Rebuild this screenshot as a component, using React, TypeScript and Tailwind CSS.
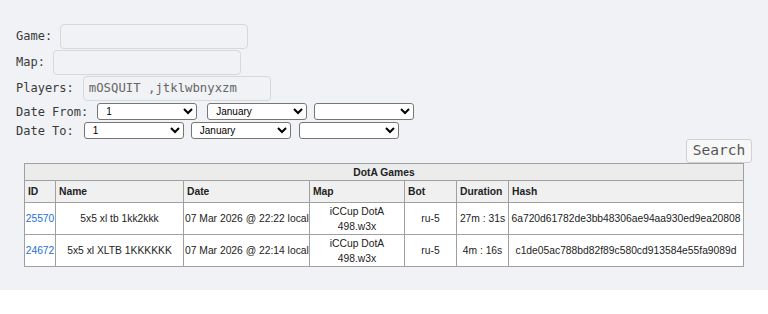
import React from 'react';

const MONO = { fontFamily: '"DejaVu Sans Mono", monospace' };

const games = [
  { id: '25570', name: '5x5 xl tb 1kk2kkk', date: '07 Mar 2026 @ 22:22 local', map: 'iCCup DotA 498.w3x', bot: 'ru-5', duration: '27m : 31s', hash: '6a720d61782de3bb48306ae94aa930ed9ea20808' },
  { id: '24672', name: '5x5 xl XLTB 1KKKKKK', date: '07 Mar 2026 @ 22:14 local', map: 'iCCup DotA 498.w3x', bot: 'ru-5', duration: '4m : 16s', hash: 'c1de05ac788bd82f89c580cd913584e55fa9089d' },
];

const days = Array.from({ length: 31 }, (_, i) => String(i + 1));
const months = ['January', 'February', 'March', 'April', 'May', 'June', 'July', 'August', 'September', 'October', 'November', 'December'];

// one row of date selects: day, month, year
const DateSelects: React.FC<{ gaps: [string, string] }> = ({ gaps }) => (
  <>
    <select className="h-[17px] w-[100px] rounded-[3px] border border-[#767676] bg-white pl-1 text-[10px] text-black" style={{ fontFamily: '"Liberation Sans", Arial, sans-serif' }} defaultValue="1">
      {days.map((d) => <option key={d}>{d}</option>)}
    </select>
    <select className={`${gaps[0]} h-[17px] w-[100px] rounded-[3px] border border-[#767676] bg-white pl-1 text-[10px] text-black`} style={{ fontFamily: '"Liberation Sans", Arial, sans-serif' }} defaultValue="January">
      {months.map((m) => <option key={m}>{m}</option>)}
    </select>
    <select className={`${gaps[1]} h-[17px] w-[100px] rounded-[3px] border border-[#767676] bg-white pl-1 text-[10px] text-black`} defaultValue="">
      <option value=""></option>
    </select>
  </>
);

const App: React.FC = () => {
  return (
    <div className="min-h-[314px] bg-white">
      <div className="bg-[#f0f2f5] px-4 pb-[23px] pt-[23px]">
        {/* search form */}
        <div className="flex h-[26px] items-center text-[12px] text-[#3a3a3a]" style={MONO}>
          <span>Game:</span>
          <input className="ml-2 h-[25px] w-[188px] rounded-[4px] border border-[#d6d8dc] bg-[#f0f2f5] px-1" />
        </div>
        <div className="flex h-[26px] items-center text-[12px] text-[#3a3a3a]" style={MONO}>
          <span>Map:</span>
          <input className="ml-2 h-[25px] w-[188px] rounded-[4px] border border-[#d6d8dc] bg-[#f0f2f5] px-1" />
        </div>
        <div className="flex h-[26px] items-center text-[12px] text-[#3a3a3a]" style={MONO}>
          <span>Players:</span>
          <input
            className="ml-[9px] h-[25px] w-[188px] rounded-[4px] border border-[#d6d8dc] bg-[#f0f2f5] px-[5px] text-[12.3px] text-[#666]"
            defaultValue="mOSQUIT ,jtklwbnyxzm"
          />
        </div>
        <div className="mt-[2px] flex h-[17px] items-center text-[12px] text-[#3a3a3a]" style={MONO}>
          <span className="mr-[9px]">Date From:</span>
          <DateSelects gaps={['ml-[10px]', 'ml-[7px]']} />
        </div>
        <div className="mt-[2px] flex h-[17px] items-center text-[12px] text-[#3a3a3a]" style={MONO}>
          <span className="mr-[10px]">Date To:</span>
          <DateSelects gaps={['ml-[7px]', 'ml-[8px]']} />
        </div>
        <div className="flex justify-end">
          <button className="h-[24px] w-[66px] rounded-[3px] border border-[#d0d0d0] bg-[#f7f7f7] text-[14.5px] text-[#555]" style={MONO}>
            Search
          </button>
        </div>

        {/* results */}
        <table
          className="mx-auto w-[720px] table-fixed border-collapse border border-[#a0a0a0] text-[10.3px] leading-[15px] text-[#222]"
          style={{ fontFamily: '"Liberation Sans", Arial, sans-serif' }}
        >
          <colgroup>
            <col className="w-[31px]" />
            <col className="w-[128px]" />
            <col className="w-[126px]" />
            <col className="w-[95px]" />
            <col className="w-[52px]" />
            <col className="w-[52px]" />
            <col />
          </colgroup>
          <thead>
            <tr className="h-[17px] bg-[#ececec]">
              <th colSpan={7} className="border border-[#a0a0a0] text-center font-bold">DotA Games</th>
            </tr>
            <tr className="h-[22px] bg-[#f0f0f0]">
              {['ID', 'Name', 'Date', 'Map', 'Bot', 'Duration', 'Hash'].map((h) => (
                <th key={h} className="border border-[#a0a0a0] px-[3px] text-left font-bold">{h}</th>
              ))}
            </tr>
          </thead>
          <tbody>
            {games.map((g) => (
              <tr key={g.id} className="h-[32px] bg-white text-center">
                <td className="border border-[#a0a0a0] px-0 whitespace-nowrap">
                  <a className="text-[#1a6fd8]">{g.id}</a>
                </td>
                <td className="border border-[#a0a0a0] px-px whitespace-nowrap">{g.name}</td>
                <td className="border border-[#a0a0a0] px-px whitespace-nowrap">{g.date}</td>
                <td className="border border-[#a0a0a0] px-[14px]">{g.map}</td>
                <td className="border border-[#a0a0a0] px-px">{g.bot}</td>
                <td className="border border-[#a0a0a0] px-px whitespace-nowrap">{g.duration}</td>
                <td className="border border-[#a0a0a0] px-px whitespace-nowrap">{g.hash}</td>
              </tr>
            ))}
          </tbody>
        </table>
      </div>
    </div>
  );
};

export default App;
